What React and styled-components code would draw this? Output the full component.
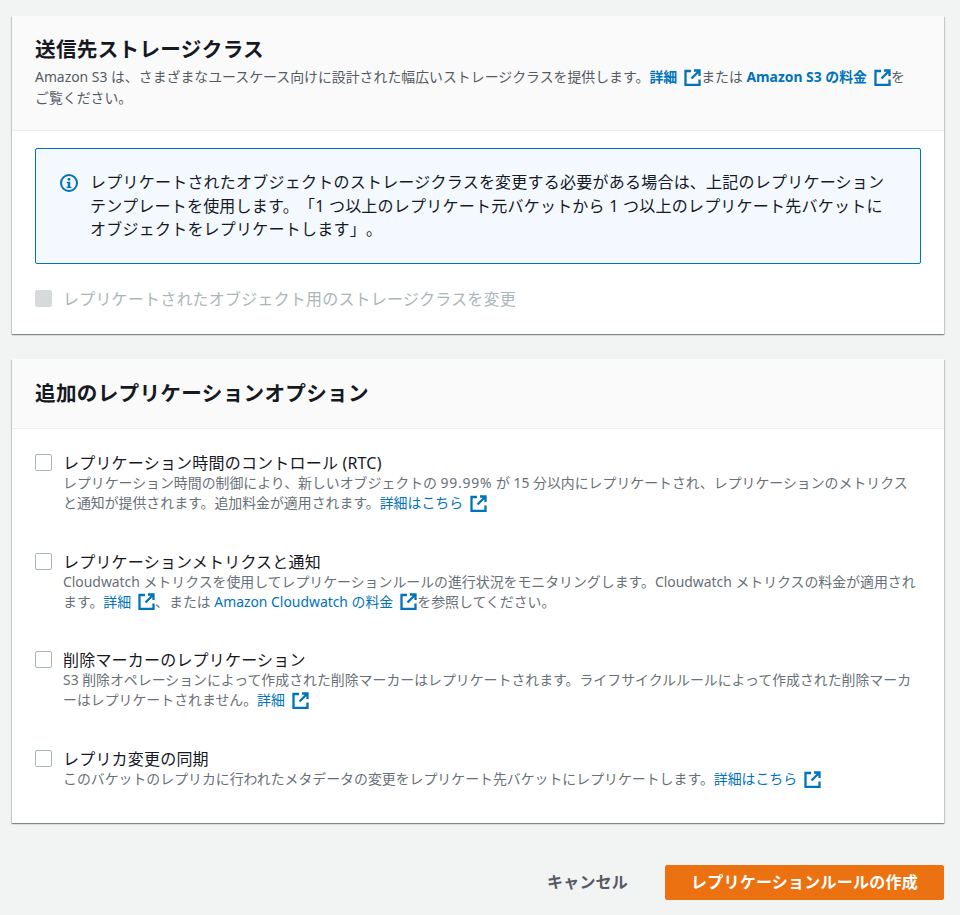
import React from "react";
import styled, { createGlobalStyle } from "styled-components";

const GlobalStyle = createGlobalStyle`
  html, body {
    margin: 0;
    background: #f2f3f3;
  }
  body {
    font-family: "Noto Sans", "Noto Sans CJK JP", sans-serif;
    color: #16191f;
    text-spacing-trim: space-all;
  }
`;

const Page = styled.div`
  box-sizing: border-box;
  width: 960px;
  height: 915px;
  overflow: hidden;
  padding: 16px 16px 0 12px;
  display: flex;
  flex-direction: column;
  gap: 25px;
`;

const Card = styled.section`
  background: #fff;
  box-shadow: 0 1px 1px 0 rgba(0, 28, 36, 0.3), 1px 1px 1px 0 rgba(0, 28, 36, 0.15),
    -1px 1px 1px 0 rgba(0, 28, 36, 0.15);
`;

const CardHeader = styled.header`
  box-sizing: border-box;
  height: ${(p) => p.$height}px;
  padding: ${(p) => p.$top}px 23px 0;
  background: #fafafa;
  border-bottom: 1px solid #eaeded;
`;

const Title = styled.h2`
  margin: 0;
  font-size: 20.6px;
  line-height: 28px;
  font-weight: 700;
  letter-spacing: 0.3px;
`;

const HeaderNote = styled.p`
  margin: 3px 0 0;
  padding-right: 10px;
  font-size: 13.9px;
  line-height: 21px;
  color: #545b64;
`;

const Link = styled.a`
  color: #0073bb;
  font-weight: ${(p) => (p.$bold ? 700 : 400)};
  text-decoration: none;
`;

const ExternalIcon = styled.svg`
  width: 17px;
  height: 17px;
  margin: 0 0 0 7px;
  vertical-align: -3.5px;
  fill: none;
  stroke: #0073bb;
  stroke-width: 2.3;
`;

const Body = styled.div`
  padding: ${(p) => p.$padding};
`;

const InfoBox = styled.div`
  box-sizing: border-box;
  height: 116px;
  display: flex;
  gap: 12px;
  padding: 22px 30px 0 24px;
  background: #f3f9ff;
  border: 1px solid #0073bb;
  border-radius: 2px;
`;

const InfoIcon = styled.svg`
  flex: none;
  width: 18px;
  height: 18px;
  margin-top: 3px;
`;

const InfoText = styled.p`
  margin: 0;
  font-size: 16px;
  line-height: 23.5px;
  letter-spacing: 0.23px;
`;

const DisabledRow = styled.div`
  display: flex;
  gap: 11px;
  margin-top: 24px;
`;

const OptionList = styled.div`
  display: flex;
  flex-direction: column;
  gap: 37.7px;
`;

const OptionRow = styled.div`
  display: flex;
  gap: 11px;
`;

const Box = styled.span`
  box-sizing: border-box;
  flex: none;
  width: 17px;
  height: 17px;
  margin-top: 2px;
  border-radius: 2px;
  background: ${(p) => (p.$disabled ? "#d5dbdb" : "#fff")};
  border: 1px solid ${(p) => (p.$disabled ? "#d5dbdb" : "#aab7b8")};
`;

const OptionTitle = styled.div`
  font-size: 16px;
  line-height: 22px;
  letter-spacing: 0.2px;
  color: ${(p) => (p.$disabled ? "#aab7b8" : "#16191f")};
`;

const OptionNote = styled.p`
  margin: -1px 0 0;
  padding-right: 5px;
  font-size: 13.9px;
  line-height: 20px;
  color: #687078;
`;

const Figure = styled.span`
  letter-spacing: 0.8px;
`;

const Footer = styled.div`
  display: flex;
  justify-content: flex-end;
  align-items: center;
  gap: 37px;
  margin-top: 17px;
`;

const CancelButton = styled.button`
  padding: 0;
  border: none;
  background: none;
  font: 700 16px/34px "Noto Sans", "Noto Sans CJK JP", sans-serif;
  letter-spacing: 0.2px;
  color: #545b64;
`;

const PrimaryButton = styled.button`
  box-sizing: border-box;
  width: 279px;
  height: 35px;
  padding: 0;
  border: 1px solid #ec7211;
  border-radius: 2px;
  background: #ec7211;
  font: 700 16px/32px "Noto Sans", "Noto Sans CJK JP", sans-serif;
  letter-spacing: 0.25px;
  color: #fff;
`;

function External() {
  return (
    <ExternalIcon viewBox="0 0 17 17" aria-hidden="true">
      <path d="M7 2H1.5v14h14v-5.5" />
      <path d="M10 1.5h5.5V7M15.5 1.5 7.5 9.5" />
    </ExternalIcon>
  );
}

function Info() {
  return (
    <InfoIcon viewBox="0 0 18 18" aria-hidden="true">
      <circle cx="9" cy="9" r="8" fill="none" stroke="#0073bb" strokeWidth="2" />
      <circle cx="9" cy="5.3" r="1.4" fill="#0073bb" />
      <path d="M6.8 7.8h3.4v4.9h1.2v1.4H6.6v-1.4h1.2V9.2h-1z" fill="#0073bb" />
    </InfoIcon>
  );
}

function Option({ title, children }) {
  return (
    <OptionRow>
      <Box />
      <div>
        <OptionTitle>{title}</OptionTitle>
        <OptionNote>{children}</OptionNote>
      </div>
    </OptionRow>
  );
}

export default function App() {
  return (
    <>
      <GlobalStyle />
      <Page>
        <Card>
          <CardHeader $height={115} $top={19}>
            <Title>送信先ストレージクラス</Title>
            <HeaderNote>
              Amazon S3 は、さまざまなユースケース向けに設計された幅広いストレージクラスを提供します。
              <Link $bold href="#">詳細<External /></Link>
              または <Link $bold href="#">Amazon S3 の料金<External /></Link>
              をご覧ください。
            </HeaderNote>
          </CardHeader>
          <Body $padding="17px 23px 24px">
            <InfoBox>
              <Info />
              <InfoText>
                レプリケートされたオブジェクトのストレージクラスを変更する必要がある場合は、上記のレプリケーションテンプレートを使用します。「1 つ以上のレプリケート元バケットから 1 つ以上のレプリケート先バケットにオブジェクトをレプリケートします」。
              </InfoText>
            </InfoBox>
            <DisabledRow>
              <Box $disabled />
              <OptionTitle $disabled>レプリケートされたオブジェクト用のストレージクラスを変更</OptionTitle>
            </DisabledRow>
          </Body>
        </Card>
        <Card>
          <CardHeader $height={70} $top={20}>
            <Title>追加のレプリケーションオプション</Title>
          </CardHeader>
          <Body $padding="23px 23px 33.5px">
            <OptionList>
              <Option title="レプリケーション時間のコントロール (RTC)">
                レプリケーション時間の制御により、新しいオブジェクトの <Figure>99.99%</Figure> が 15 分以内にレプリケートされ、レプリケーションのメトリクスと通知が提供されます。追加料金が適用されます。
                <Link href="#">詳細はこちら<External /></Link>
              </Option>
              <Option title="レプリケーションメトリクスと通知">
                Cloudwatch メトリクスを使用してレプリケーションルールの進行状況をモニタリングします。Cloudwatch メトリクスの料金が適用されます。
                <Link href="#">詳細<External /></Link>
                、または <Link href="#">Amazon Cloudwatch の料金<External /></Link>
                を参照してください。
              </Option>
              <Option title="削除マーカーのレプリケーション">
                S3 削除オペレーションによって作成された削除マーカーはレプリケートされます。ライフサイクルルールによって作成された削除マーカーはレプリケートされません。
                <Link href="#">詳細<External /></Link>
              </Option>
              <Option title="レプリカ変更の同期">
                このバケットのレプリカに行われたメタデータの変更をレプリケート先バケットにレプリケートします。
                <Link href="#">詳細はこちら<External /></Link>
              </Option>
            </OptionList>
          </Body>
        </Card>
        <Footer>
          <CancelButton>キャンセル</CancelButton>
          <PrimaryButton>レプリケーションルールの作成</PrimaryButton>
        </Footer>
      </Page>
    </>
  );
}
